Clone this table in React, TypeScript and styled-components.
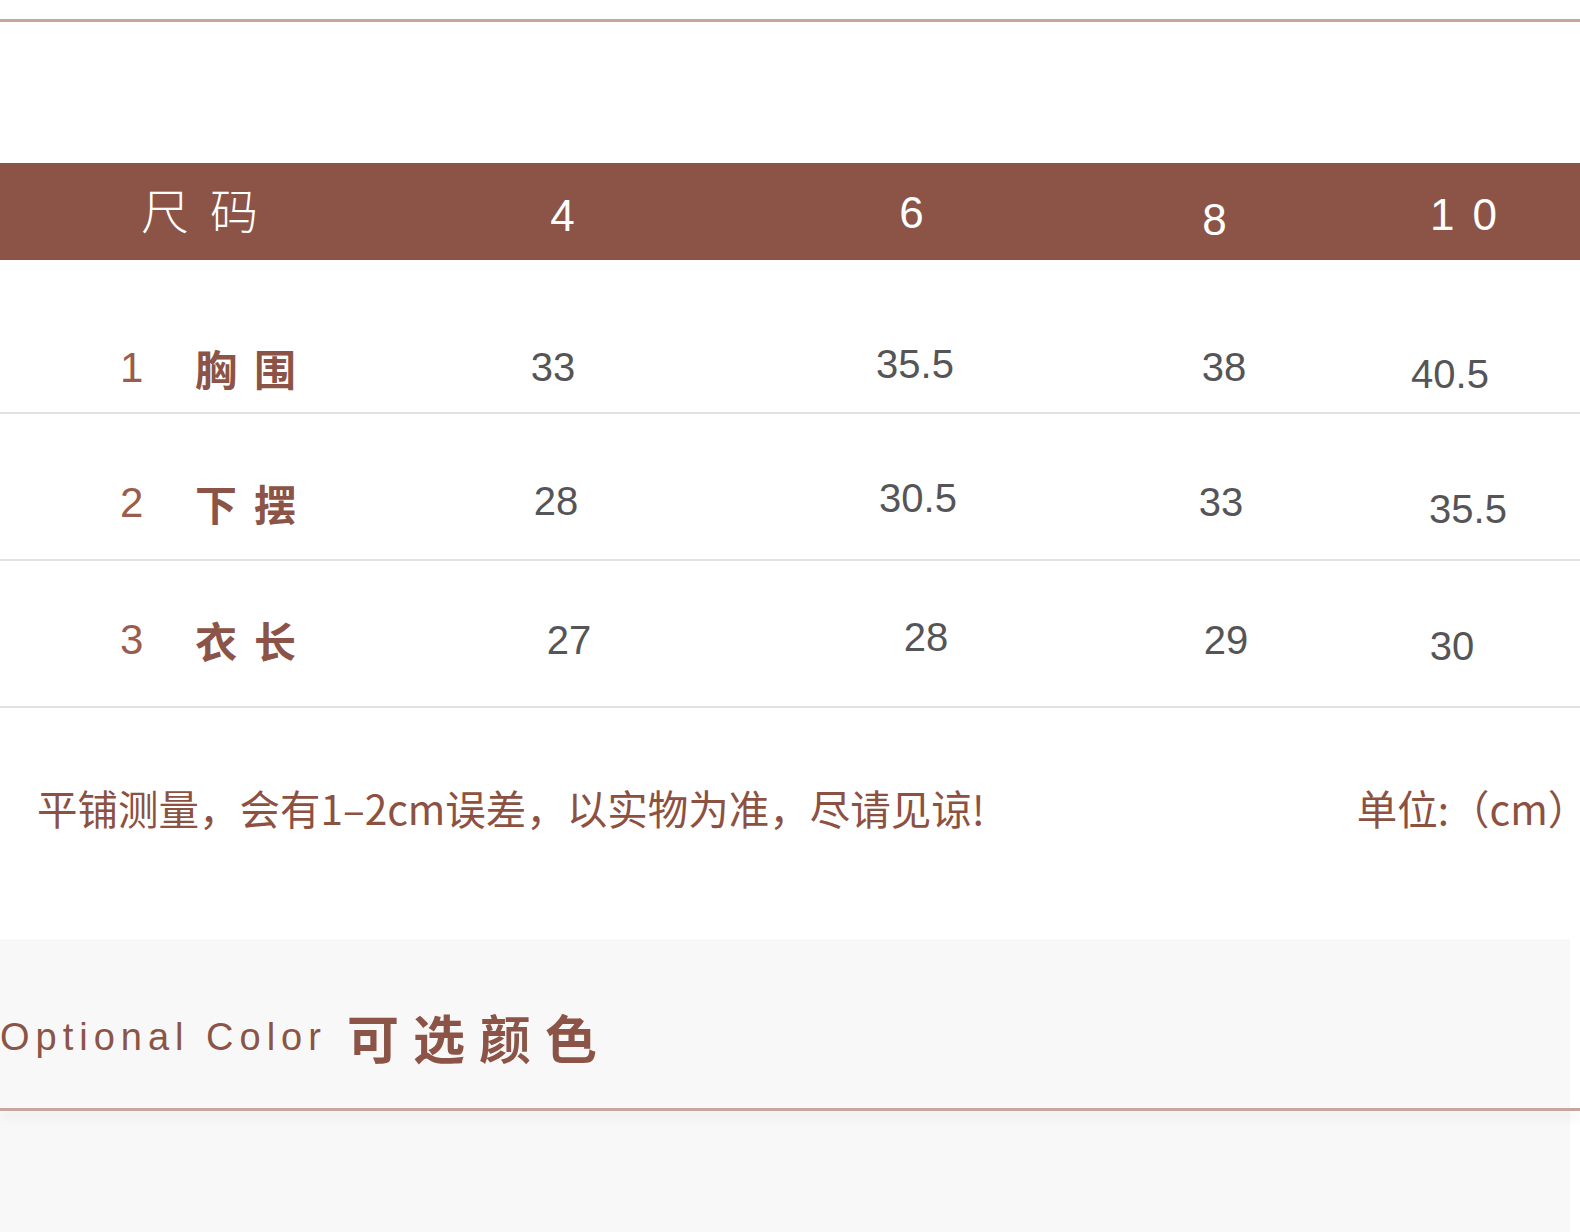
import React from "react";
import styled, { createGlobalStyle } from "styled-components";

const GlobalStyle = createGlobalStyle`
  html, body {
    margin: 0;
    padding: 0;
    background: #ffffff;
  }
  * {
    box-sizing: border-box;
  }
`;

const BROWN = "#8b5446";
const RULE = "#c6a69e";
const COLUMNS = "380px 364px 344px 264px 1fr";
const CJK = `"Noto Sans CJK SC", "Noto Sans", sans-serif`;
const LATIN = `"Liberation Sans", Arial, sans-serif`;

type Cell = { v: string; dx: number; dy: number };
type Row = { no: string; name: string; pt: number; h: number; cells: Cell[] };

const sizes: Cell[] = [
  { v: "4", dx: 2, dy: 4 },
  { v: "6", dx: -3, dy: 1 },
  { v: "8", dx: -4, dy: 8 },
  { v: "1 0", dx: -1, dy: 3 },
];

const rows: Row[] = [
  {
    no: "1",
    name: "胸围",
    pt: 64,
    h: 154,
    cells: [
      { v: "33", dx: -9, dy: -1 },
      { v: "35.5", dx: -1, dy: -4 },
      { v: "38", dx: 4, dy: -1 },
      { v: "40.5", dx: -16, dy: 6 },
    ],
  },
  {
    no: "2",
    name: "下摆",
    pt: 33,
    h: 147,
    cells: [
      { v: "28", dx: -6, dy: -2 },
      { v: "30.5", dx: 2, dy: -5 },
      { v: "33", dx: 1, dy: -1 },
      { v: "35.5", dx: 2, dy: 6 },
    ],
  },
  {
    no: "3",
    name: "衣长",
    pt: 13,
    h: 147,
    cells: [
      { v: "27", dx: 7, dy: 0 },
      { v: "28", dx: 10, dy: -3 },
      { v: "29", dx: 6, dy: 0 },
      { v: "30", dx: -14, dy: 6 },
    ],
  },
];

const Page = styled.div`
  width: 1580px;
  background: #ffffff;
  overflow: hidden;
`;

const TopRule = styled.div`
  margin-top: 19px;
  height: 3px;
  background: ${RULE};
`;

const HeaderBar = styled.div`
  margin-top: 141px;
  height: 97px;
  background: ${BROWN};
  display: grid;
  grid-template-columns: ${COLUMNS};
  align-items: center;
  justify-items: center;
  color: #ffffff;
`;

const HeaderTitle = styled.div`
  justify-self: start;
  padding-left: 141px;
  padding-bottom: 8px;
  font-family: ${CJK};
  font-weight: 300;
  font-size: 48px;
  line-height: 1;
  letter-spacing: 21px;
`;

const HeaderSize = styled.div<{ $dx: number; $dy: number }>`
  font-family: ${LATIN};
  font-size: 44px;
  line-height: 1;
  letter-spacing: 3px;
  transform: translate(${(p) => p.$dx}px, ${(p) => p.$dy}px);
`;

const TableRow = styled.div<{ $pt: number; $h: number }>`
  height: ${(p) => p.$h}px;
  padding-top: ${(p) => p.$pt}px;
  border-bottom: 2px solid #e2e2e2;
  display: grid;
  grid-template-columns: ${COLUMNS};
  align-items: center;
  justify-items: center;
`;

const Label = styled.div`
  justify-self: start;
  display: flex;
  align-items: center;
  padding-left: 120px;
`;

const LabelNo = styled.span`
  width: 75px;
  font-family: ${LATIN};
  font-size: 42px;
  line-height: 1;
  color: #9a5c4c;
`;

const LabelName = styled.span`
  font-family: ${CJK};
  font-weight: 700;
  font-size: 42px;
  line-height: 1;
  letter-spacing: 17px;
  color: ${BROWN};
`;

const Value = styled.div<{ $dx: number; $dy: number }>`
  font-family: ${LATIN};
  font-size: 40px;
  line-height: 1;
  color: #555557;
  transform: translate(${(p) => p.$dx}px, ${(p) => p.$dy}px);
`;

const NoteRow = styled.div`
  height: 231px;
  padding: 80px 12px 0 37px;
  display: flex;
  justify-content: space-between;
  align-items: flex-start;
  font-family: ${CJK};
  font-size: 40.5px;
  line-height: 1;
  color: #8d5142;
`;

const Note = styled.span`
  font-weight: 400;
`;

const CloseParen = styled.span`
  font-feature-settings: "halt";
`;

const Panel = styled.div<{ $h: number }>`
  width: 1570px;
  height: ${(p) => p.$h}px;
  background: #f8f8f8;
`;

const TitlePanel = styled(Panel)`
  display: flex;
  align-items: center;
  padding-top: 26px;
  gap: 20px;
`;

const TitleLatin = styled.span`
  font-family: ${LATIN};
  font-size: 38px;
  line-height: 1;
  letter-spacing: 6px;
  color: ${BROWN};
`;

const TitleCjk = styled.span`
  font-family: ${CJK};
  font-weight: 700;
  font-size: 52px;
  line-height: 1;
  letter-spacing: 14px;
  color: ${BROWN};
`;

const Divider = styled.div`
  position: relative;
  z-index: 1;
  height: 3px;
  background: ${RULE};
  box-shadow: 0 6px 10px rgba(0, 0, 0, 0.1);
`;

const App: React.FC = () => {
  return (
    <Page>
      <GlobalStyle />
      <TopRule />
      <HeaderBar>
        <HeaderTitle>尺码</HeaderTitle>
        {sizes.map((s) => (
          <HeaderSize key={s.v} $dx={s.dx} $dy={s.dy}>
            {s.v}
          </HeaderSize>
        ))}
      </HeaderBar>
      {rows.map((row) => (
        <TableRow key={row.no} $pt={row.pt} $h={row.h}>
          <Label>
            <LabelNo>{row.no}</LabelNo>
            <LabelName>{row.name}</LabelName>
          </Label>
          {row.cells.map((c, i) => (
            <Value key={i} $dx={c.dx} $dy={c.dy}>
              {c.v}
            </Value>
          ))}
        </TableRow>
      ))}
      <NoteRow>
        <Note>平铺测量，会有1–2cm误差，以实物为准，尽请见谅!</Note>
        <Note>
          单位:（cm<CloseParen>）</CloseParen>
        </Note>
      </NoteRow>
      <TitlePanel $h={169}>
        <TitleLatin>Optional Color</TitleLatin>
        <TitleCjk>可选颜色</TitleCjk>
      </TitlePanel>
      <Divider />
      <Panel $h={121} />
    </Page>
  );
};

export default App;
